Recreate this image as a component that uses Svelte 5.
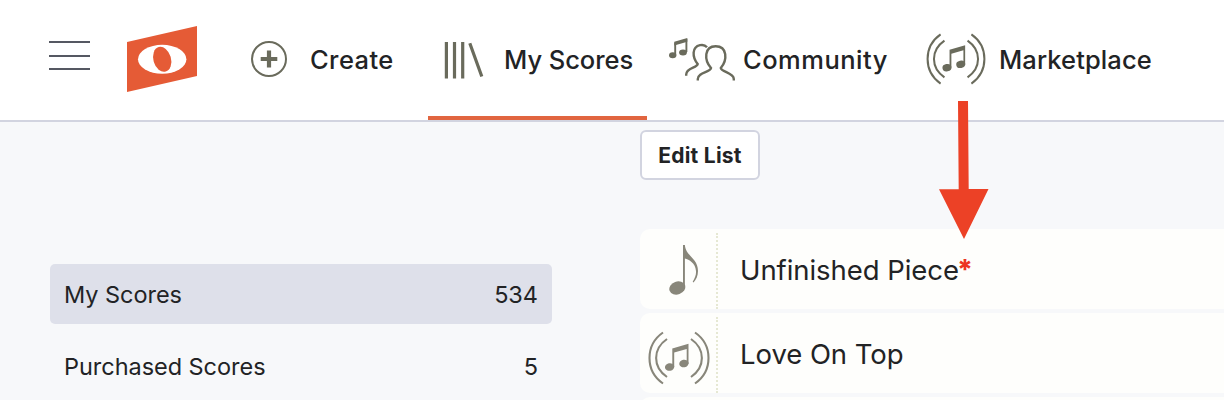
<script lang="ts">
  interface NavItem {
    id: string;
    label: string;
  }

  const navItems: NavItem[] = [
    { id: 'create', label: 'Create' },
    { id: 'scores', label: 'My Scores' },
    { id: 'community', label: 'Community' },
    { id: 'marketplace', label: 'Marketplace' },
  ];

  const folders = [
    { name: 'My Scores', count: 534 },
    { name: 'Purchased Scores', count: 5 },
  ];

  const scores = [
    { title: 'Unfinished Piece', kind: 'note', marked: true },
    { title: 'Love On Top', kind: 'market', marked: false },
  ];

  let activeNav = $state('scores');
  let activeFolder = $state('My Scores');
</script>

{#snippet broadcast()}
  <svg class="broadcast" viewBox="0 0 62 54" fill="none" stroke="currentColor" stroke-width="2.1">
    <path d="M15 1.5C-3 14-3 40 15 52.5M19 8C4.5 18 4.5 36 19 46M47 1.5C65 14 65 40 47 52.5M43 8C57.5 18 57.5 36 43 46" />
    <g fill="currentColor" stroke="none">
      <path d="M24.3 17.5 40.5 12.8V33H38.7V17.9L26.2 21.5V36H24.3Z" />
      <ellipse cx="21.6" cy="36" rx="4.7" ry="3.8" transform="rotate(-12 21.6 36)" />
      <ellipse cx="35.9" cy="32.5" rx="4.7" ry="3.8" transform="rotate(-12 35.9 32.5)" />
    </g>
  </svg>
{/snippet}

{#snippet navIcon(id: string)}
  {#if id === 'create'}
    <svg width="38" height="38" viewBox="0 0 38 38" fill="none" stroke="currentColor">
      <circle cx="19" cy="19" r="17" stroke-width="2" />
      <path d="M10.7 19H27.3M19 10.5V27.5" stroke-width="4.2" />
    </svg>
  {:else if id === 'scores'}
    <svg width="40" height="38" viewBox="0 0 40 38" fill="none" stroke="currentColor" stroke-width="3.2">
      <path d="M2.4 1V37.5M10.5 1V37.5M18.7 1V37.5M25.8 2.3 37.8 35.5" />
    </svg>
  {:else if id === 'community'}
    <svg width="67" height="46" viewBox="0 0 67 46" fill="none" stroke="currentColor" stroke-width="2.4">
      <path d="M6.2 19V6.5M17.4 16V3" stroke-width="1.9" />
      <path d="M5.3 5.8 18.3 2V5.8L5.3 9.6Z" fill="currentColor" stroke="none" />
      <ellipse cx="3.7" cy="19.2" rx="3.7" ry="3" fill="currentColor" stroke="none" />
      <ellipse cx="14" cy="16.5" rx="3.9" ry="3" fill="currentColor" stroke="none" />
      <path d="M17.2 39.8V38.5C17.2 31.5 28 32 28.7 28C23 21 22.8 11 31 9.2C34 8.5 36.5 9.5 38 11.3" />
      <path d="M28.8 44.5V43C28.8 36 41.5 36.5 42 32C35 24 35 10.2 46.7 10.2C58.5 10.2 58.5 24 51.8 32C52.5 36 64.8 37 64.8 43V44.5" />
    </svg>
  {:else}
    {@render broadcast()}
  {/if}
{/snippet}

<div class="app">
  <header>
    <button class="menu" aria-label="Menu">
      <span></span>
      <span></span>
      <span></span>
    </button>

    <svg class="logo" width="70" height="66" viewBox="0 0 70 66">
      <path d="M0 16 70 0V50L0 66Z" fill="#e55b36" />
      <ellipse cx="35.2" cy="33.3" rx="24.2" ry="14.5" fill="#fff" />
      <ellipse cx="35.2" cy="33.3" rx="8.8" ry="12.7" fill="#e55b36" transform="rotate(-16 35.2 33.3)" />
    </svg>

    <nav>
      {#each navItems as item}
        <button
          class="nav-item {item.id}"
          class:active={item.id === activeNav}
          onclick={() => (activeNav = item.id)}
        >
          {@render navIcon(item.id)}
          <span>{item.label}</span>
        </button>
      {/each}
    </nav>
  </header>

  <main>
    <aside>
      {#each folders as folder}
        <button
          class="folder"
          class:selected={folder.name === activeFolder}
          onclick={() => (activeFolder = folder.name)}
        >
          <span>{folder.name}</span>
          <span>{folder.count}</span>
        </button>
      {/each}
    </aside>

    <section>
      <button class="edit">Edit List</button>
      <div class="list">
        {#each scores as score}
          <div class="row">
            <div class="thumb {score.kind}">
              {#if score.kind === 'note'}
                <svg width="30" height="52" viewBox="0 0 30 52" fill="currentColor">
                  <ellipse cx="8.3" cy="44" rx="8.2" ry="6.4" transform="rotate(-20 8.3 44)" />
                  <path d="M14 1H15.9C16.5 12 29 14 29 27C29 32 27 36 24.5 38.5L23.7 37.7C26 34 27.3 31 27 27C26.5 19 20 15.5 15.9 14.5V43H14Z" />
                </svg>
              {:else}
                {@render broadcast()}
              {/if}
            </div>
            <span class="title">{score.title}</span>
            {#if score.marked}<span class="star">*</span>{/if}
          </div>
        {/each}
        <div class="row"></div>
      </div>
    </section>
  </main>

  <svg class="arrow" width="50" height="139" viewBox="0 0 50 139">
    <path d="M19 0H29L29.7 88H49.5L25 138 0 88.3H19.7Z" fill="#ec4126" />
  </svg>
</div>

<style>
  :global(body) {
    margin: 0;
  }

  .app {
    position: relative;
    width: 1224px;
    height: 400px;
    overflow: hidden;
    background: #f7f8fa;
    color: #222325;
    font-family: Inter, 'Liberation Sans', sans-serif;
  }

  button {
    margin: 0;
    padding: 0;
    border: none;
    background: none;
    color: inherit;
    font: inherit;
    cursor: pointer;
  }

  svg {
    display: block;
    flex: none;
  }

  header {
    display: flex;
    align-items: flex-start;
    height: 120px;
    background: #fff;
    border-bottom: 2px solid #d2d4e0;
  }

  .menu {
    display: flex;
    flex-direction: column;
    gap: 11.5px;
    width: 41px;
    margin: 41px 37px 0 49px;
  }

  .menu span {
    height: 2px;
    background: #555862;
  }

  .logo {
    margin-top: 26px;
  }

  nav {
    display: flex;
    height: 120px;
    margin-left: 53px;
  }

  .nav-item {
    display: flex;
    align-items: center;
    box-sizing: border-box;
    height: 120px;
    border-bottom: 4px solid transparent;
    font-size: 25.5px;
    font-weight: 500;
    white-space: nowrap;
  }

  .nav-item.active {
    border-bottom-color: #e16540;
  }

  .nav-item svg {
    color: #6a6b5c;
  }

  .create {
    width: 178px;
    gap: 22px;
    padding-top: 2px;
    letter-spacing: 0.4px;
  }

  .scores {
    width: 219px;
    padding: 4px 0 0 16px;
    gap: 20px;
    letter-spacing: -0.05px;
  }

  .scores span {
    padding-bottom: 2px;
  }

  .community {
    padding: 2px 0 0 22px;
    width: 278px;
    gap: 7px;
    letter-spacing: 0.5px;
  }

  .marketplace {
    padding: 2px 0 0 1px;
    gap: 13px;
    letter-spacing: 0.1px;
  }

  .broadcast {
    width: 62px;
    height: 54px;
  }

  .marketplace .broadcast {
    width: 60px;
    height: 52px;
  }

  main {
    display: flex;
  }

  aside {
    display: flex;
    flex-direction: column;
    gap: 12px;
    width: 502px;
    padding: 142px 88px 0 50px;
  }

  .folder {
    display: flex;
    align-items: center;
    justify-content: space-between;
    box-sizing: border-box;
    height: 60px;
    padding: 0 14px;
    border-radius: 5px;
    font-size: 23.5px;
    font-weight: 400;
    letter-spacing: -0.04px;
  }

  .folder.selected {
    background: #dee0ea;
  }

  section {
    flex: 1;
    padding-top: 8px;
  }

  .edit {
    box-sizing: border-box;
    width: 120px;
    height: 50px;
    border: 2px solid #d2d4e0;
    border-radius: 6px;
    background: #fff;
    font-size: 21px;
    font-weight: 650;
    letter-spacing: 0.25px;
  }

  .list {
    display: flex;
    flex-direction: column;
    gap: 4px;
    margin-top: 49px;
  }

  .row {
    display: flex;
    align-items: center;
    height: 80px;
    border-radius: 10px 0 0 10px;
    background: #fefefc;
    font-size: 27.5px;
    font-weight: 400;
  }

  .thumb {
    display: flex;
    align-items: center;
    justify-content: center;
    box-sizing: border-box;
    width: 78px;
    height: 76px;
    margin: 4px 22px 0 0;
    padding: 5px 0 0 2px;
    border-right: 2px dotted #e6e8d3;
    color: #88867a;
  }

  .thumb.note {
    padding: 0 0 2px 12px;
  }

  .title {
    padding-top: 2px;
    letter-spacing: -0.06px;
  }

  .star {
    margin-left: -2px;
    color: #ec3323;
    font-weight: 800;
  }

  .arrow {
    position: absolute;
    left: 939px;
    top: 101px;
  }
</style>
